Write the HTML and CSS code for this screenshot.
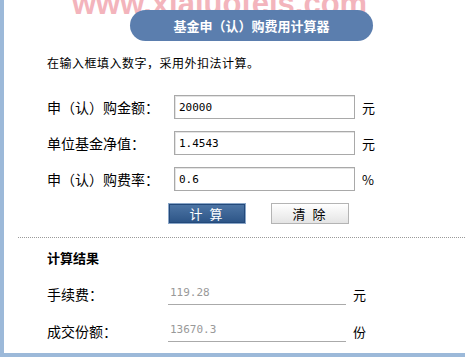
FILE: index.html
```html
<!DOCTYPE html>
<html lang="zh-CN">
<head>
    <meta charset="UTF-8">
    <title>基金申（认）购费用计算器</title>
    <link rel="stylesheet" href="styles.css">
</head>
<body>
    <div class="page">
        <div class="watermark">www.xiaiuotejs.com</div>
        <div class="title">基金申（认）购费用计算器</div>
        <p class="intro">在输入框填入数字，采用外扣法计算。</p>

        <div class="form">
            <div class="row">
                <label>申（认）购金额：</label>
                <input class="field" type="text" value="20000">
                <span class="unit">元</span>
            </div>
            <div class="row">
                <label>单位基金净值：</label>
                <input class="field" type="text" value="1.4543">
                <span class="unit">元</span>
            </div>
            <div class="row">
                <label>申（认）购费率：</label>
                <input class="field" type="text" value="0.6">
                <span class="unit">%</span>
            </div>
        </div>

        <div class="buttons">
            <button class="btn btn-calc">计 算</button>
            <button class="btn btn-clear">清 除</button>
        </div>

        <div class="results">
            <h4>计算结果</h4>
            <div class="result">
                <span class="rlabel">手续费：</span>
                <span class="rvalue">119.28</span>
                <span class="unit">元</span>
            </div>
            <div class="result">
                <span class="rlabel">成交份额：</span>
                <span class="rvalue">13670.3</span>
                <span class="unit">份</span>
            </div>
        </div>
    </div>
</body>
</html>
```

FILE: styles.css
```css
body {
    margin: 0;
    font-family: "Noto Sans CJK SC", "Liberation Sans", sans-serif;
    background-color: #fff;
    color: #000;
}

.page {
    position: relative;
    height: 353px;
    border-left: 4px solid #9cb9d9;
    border-bottom: 4px solid #9cb9d9;
    overflow: hidden;
}

/* pink site stamp, cut off by the top edge */
.watermark {
    position: absolute;
    left: 68px;
    top: -14px;
    font-family: "Liberation Sans", sans-serif;
    font-size: 31px;
    font-weight: bold;
    color: #f3b4bc;
}

.title {
    position: relative;
    margin: 10px 0 0 126px;
    width: 243px;
    height: 31px;
    line-height: 31px;
    border-radius: 16px;
    background-color: #5b7eae;
    color: #fff;
    font-size: 13px;
    font-weight: bold;
    text-align: center;
}

.intro {
    margin: 14px 0 0 43px;
    font-size: 12px;
    letter-spacing: 0.5px;
    line-height: 16px;
}

.form {
    margin-top: 24px;
    display: flex;
    flex-direction: column;
    gap: 12px;
}

.row {
    display: flex;
    align-items: center;
    height: 24px;
}

.row label {
    width: 127px;
    padding-left: 43px;
    font-size: 14px;
}

.field {
    box-sizing: border-box;
    width: 181px;
    height: 24px;
    margin: 0;
    padding: 0 4px;
    border: 1px solid #a9a9a9;
    box-shadow: inset 1px 1px 0 #e4e4e4;
    font-family: "DejaVu Sans Mono", monospace;
    font-size: 11px;
    color: #000;
}

.unit {
    margin-left: 7px;
    font-size: 13px;
}

.buttons {
    display: flex;
    gap: 25px;
    margin: 12px 0 0 164px;
}

.btn {
    box-sizing: border-box;
    width: 78px;
    height: 21px;
    padding: 0;
    font-family: "Noto Sans CJK SC", sans-serif;
    font-size: 13px;
    line-height: 19px;
    letter-spacing: 2px;
}

.btn-calc {
    color: #fff;
    border: 1px solid #8aa6c8;
    outline: 1px solid #23497a;
    outline-offset: -2px;
    background: linear-gradient(#4e76a6, #2c5486);
}

.btn-clear {
    color: #000;
    border: 1px solid #b4b4b4;
    background: linear-gradient(#ffffff, #e4e4e4);
}

.results {
    margin: 13px 0 0 14px;
    padding-top: 8px;
    border-top: 1px dotted #9a9a9a;
}

.results h4 {
    margin: 4px 0 17px 29px;
    font-size: 13px;
    line-height: 16px;
}

.result {
    display: flex;
    align-items: center;
    height: 22px;
    margin-bottom: 15px;
}

.rlabel {
    width: 121px;
    padding-left: 29px;
    font-size: 14px;
    line-height: 22px;
}

.rvalue {
    box-sizing: border-box;
    width: 178px;
    height: 22px;
    padding: 0 2px;
    border-bottom: 1px solid #aaa;
    font-family: "DejaVu Sans Mono", monospace;
    font-size: 11px;
    line-height: 20px;
    color: #999;
}

.result .unit {
    margin-left: 7px;
}
```
